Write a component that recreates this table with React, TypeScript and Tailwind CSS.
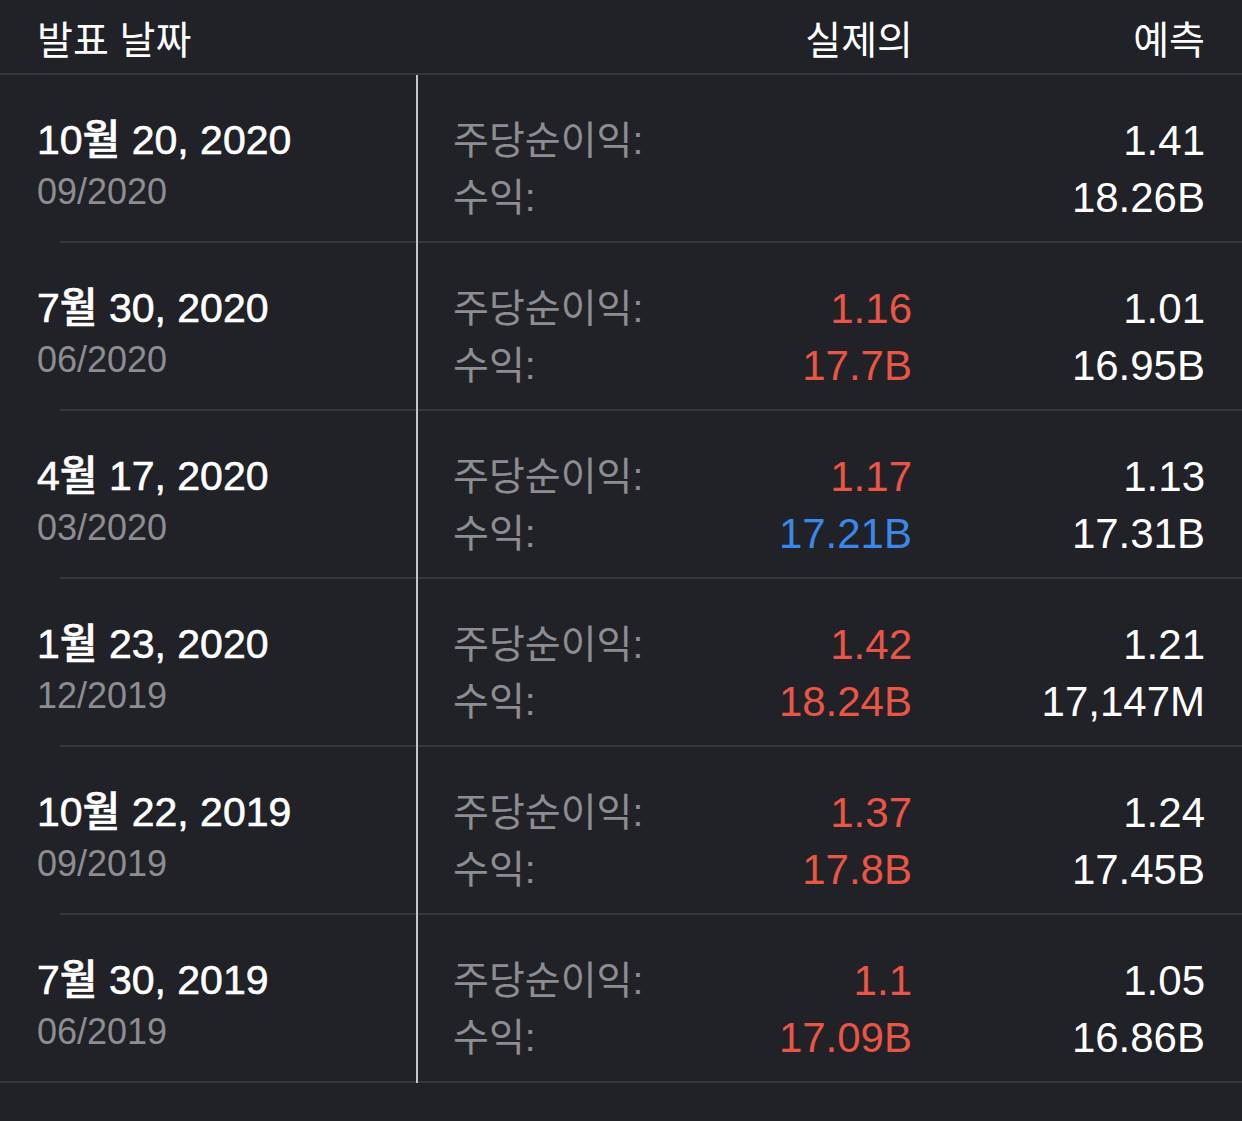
import React from "react"

interface Row {
  date: string
  period: string
  epsActual: string
  revActual: string
  epsEst: string
  revEst: string
  epsColor: string
  revColor: string
}

const RED = "text-[#eb5545]"
const BLUE = "text-[#3c88ea]"

const rows: Row[] = [
  { date: "10월 20, 2020", period: "09/2020", epsActual: "", revActual: "", epsEst: "1.41", revEst: "18.26B", epsColor: RED, revColor: RED },
  { date: "7월 30, 2020", period: "06/2020", epsActual: "1.16", revActual: "17.7B", epsEst: "1.01", revEst: "16.95B", epsColor: RED, revColor: RED },
  { date: "4월 17, 2020", period: "03/2020", epsActual: "1.17", revActual: "17.21B", epsEst: "1.13", revEst: "17.31B", epsColor: RED, revColor: BLUE },
  { date: "1월 23, 2020", period: "12/2019", epsActual: "1.42", revActual: "18.24B", epsEst: "1.21", revEst: "17,147M", epsColor: RED, revColor: RED },
  { date: "10월 22, 2019", period: "09/2019", epsActual: "1.37", revActual: "17.8B", epsEst: "1.24", revEst: "17.45B", epsColor: RED, revColor: RED },
  { date: "7월 30, 2019", period: "06/2019", epsActual: "1.1", revActual: "17.09B", epsEst: "1.05", revEst: "16.86B", epsColor: RED, revColor: RED },
]

export default function App() {
  return (
    <div
      className="w-[1242px] h-[1121px] bg-[#202227] text-white overflow-hidden"
      style={{ fontFamily: '"Liberation Sans", "Noto Sans CJK KR", sans-serif' }}
    >
      {/* header */}
      <div className="flex items-center h-[75px] pt-[8px] border-b-2 border-[#35373b] text-[39px] leading-none">
        <div className="pl-[37px] w-[416px]">발표 날짜</div>
        <div className="w-[497px] text-right">실제의</div>
        <div className="flex-1 text-right pr-[37px]">예측</div>
      </div>

      {rows.map((r, i) => {
        const last = i === rows.length - 1
        return (
          <div key={i} className="flex">
            <div className="w-[418px] flex flex-col border-r-2 border-[#c6c6c6]">
              <div className="h-[166px] flex flex-col justify-center pl-[37px] pt-[18px]">
                <div className="text-[41px] font-medium leading-[50px] whitespace-nowrap [-webkit-text-stroke:0.6px_white]">{r.date}</div>
                <div className="text-[36px] leading-[54px] text-[#8d8d92]">{r.period}</div>
              </div>
              <div className={`h-[2px] bg-[#35373b] ${last ? "" : "ml-[60px]"}`}></div>
            </div>
            <div className="flex-1 flex flex-col">
              <div className="h-[166px] flex items-center pt-[22px]">
                <div className="pl-[35px] w-[230px] text-[39px] leading-[57px] text-[#8d8d92] whitespace-nowrap">
                  <div>주당순이익:</div>
                  <div>수익:</div>
                </div>
                <div className="w-[264px] text-right text-[42px] leading-[57px]">
                  <div className={r.epsColor}>{r.epsActual || "\u00a0"}</div>
                  <div className={r.revColor}>{r.revActual || "\u00a0"}</div>
                </div>
                <div className="flex-1 text-right pr-[37px] text-[42px] leading-[57px]">
                  <div>{r.epsEst}</div>
                  <div>{r.revEst}</div>
                </div>
              </div>
              <div className="h-[2px] bg-[#35373b]"></div>
            </div>
          </div>
        )
      })}
    </div>
  )
}
